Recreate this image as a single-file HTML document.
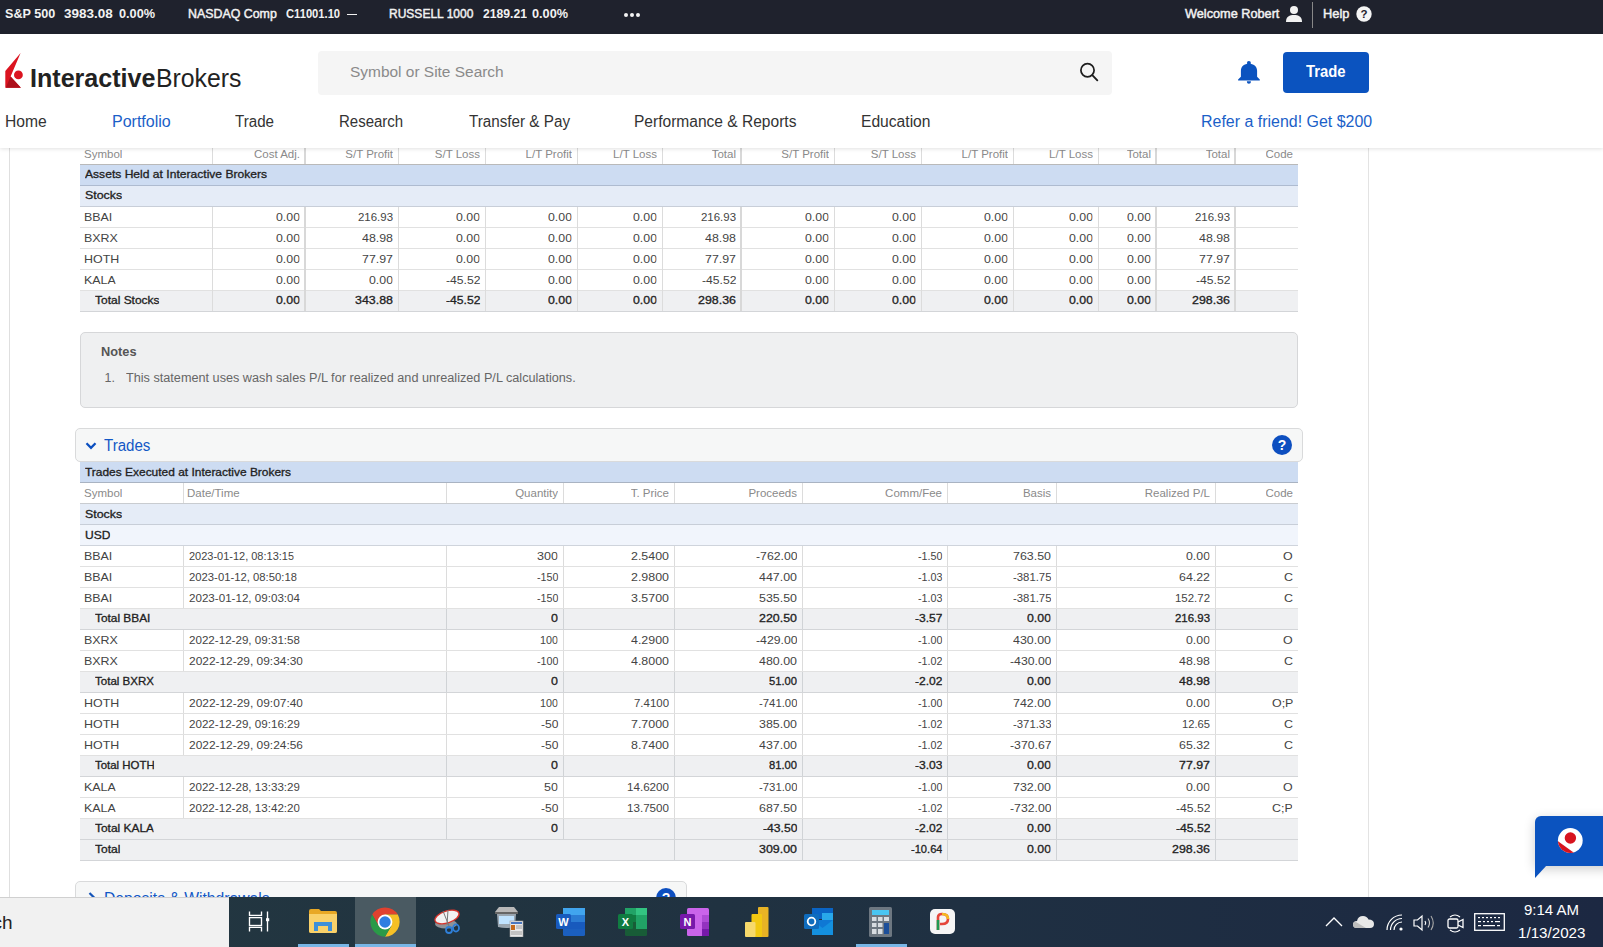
<!DOCTYPE html><html><head><meta charset="utf-8"><style>
*{box-sizing:border-box;margin:0;padding:0}
html,body{width:1603px;height:947px;overflow:hidden;background:#fff;font-family:"Liberation Sans",sans-serif;color:#333}
.a{position:absolute;white-space:nowrap}
#top{position:absolute;left:0;top:0;width:1603px;height:34px;background:#1f222d}
#top .t{position:absolute;top:7px;font-size:13px;font-weight:bold;color:#f2f2f2;line-height:13px}
#hdr{position:absolute;left:0;top:34px;width:1603px;height:114px;background:#fff;z-index:5;box-shadow:0 1px 4px rgba(0,0,0,0.12)}
.nav{position:absolute;top:78.5px;font-size:16px;line-height:18px;color:#333}
.cell{position:absolute;font-size:11px;line-height:12px;white-space:nowrap;overflow:hidden}
.r{text-align:right}
</style></head><body>
<div id="top">
<span class="t" style="left:4.5px;top:7px;font-size:13px;display:inline-block;transform:scaleX(0.9692);transform-origin:0 0;">S&amp;P 500</span>
<span class="t" style="left:64.3px;top:7px;font-size:13px;display:inline-block;transform:scaleX(1.0362);transform-origin:0 0;">3983.08</span>
<span class="t" style="left:119.2px;top:7px;font-size:13px;display:inline-block;transform:scaleX(0.9790);transform-origin:0 0;">0.00%</span>
<span class="t" style="left:187.5px;top:7.6px;font-size:12.5px;font-weight:normal;-webkit-text-stroke:0.45px #f2f2f2;display:inline-block;transform:scaleX(0.9910);transform-origin:0 0;">NASDAQ Comp</span>
<span class="t" style="left:285.9px;top:7px;font-size:13px;display:inline-block;transform:scaleX(0.8600);transform-origin:0 0;">C11001.10</span>
<span class="a" style="left:347px;top:13.5px;width:10px;height:1.5px;background:#f2f2f2"></span>
<span class="t" style="left:388.6px;top:7.6px;font-size:12.5px;font-weight:normal;-webkit-text-stroke:0.45px #f2f2f2;display:inline-block;transform:scaleX(0.9613);transform-origin:0 0;">RUSSELL 1000</span>
<span class="t" style="left:482.5px;top:7px;font-size:13px;display:inline-block;transform:scaleX(0.9340);transform-origin:0 0;">2189.21</span>
<span class="t" style="left:531.8px;top:7px;font-size:13px;display:inline-block;transform:scaleX(0.9763);transform-origin:0 0;">0.00%</span>
<span class="a" style="left:624px;top:13px;width:4px;height:4px;border-radius:2px;background:#f4f4f4"></span>
<span class="a" style="left:630px;top:13px;width:4px;height:4px;border-radius:2px;background:#f4f4f4"></span>
<span class="a" style="left:636px;top:13px;width:4px;height:4px;border-radius:2px;background:#f4f4f4"></span>
<span class="t" style="left:1185.4px;top:7.6px;font-size:12.5px;font-weight:normal;-webkit-text-stroke:0.45px #f2f2f2;display:inline-block;transform:scaleX(1.0166);transform-origin:0 0;">Welcome Robert</span>
<svg class="a" style="left:1285px;top:5px" width="18" height="18" viewBox="0 0 18 18"><circle cx="9" cy="5" r="4" fill="#f2f2f2"/><path d="M1 17 C1 11.5 4.5 10 9 10 C13.5 10 17 11.5 17 17 Z" fill="#f2f2f2"/></svg>
<span class="a" style="left:1312px;top:2px;width:1px;height:26px;background:#888"></span>
<span class="t" style="left:1323.4px;top:7.6px;font-size:12.5px;font-weight:normal;-webkit-text-stroke:0.45px #f2f2f2;display:inline-block;transform:scaleX(1.0265);transform-origin:0 0;">Help</span>
<svg class="a" style="left:1356px;top:6px" width="16" height="16" viewBox="0 0 16 16"><circle cx="8" cy="8" r="7.7" fill="#f5f5f5"/><text x="8" y="12.3" text-anchor="middle" font-family="Liberation Sans" font-weight="bold" font-size="11.5" fill="#1f222d">?</text></svg>
</div>
<div id="hdr">
<svg class="a" style="left:4px;top:19px" width="20" height="36" viewBox="0 0 20 36"><path d="M16.6 0 L1.3 17.9 L1.3 34.7 L16.9 34.7 L6.6 23.6 Z" fill="#db1420"/><path d="M6.6 23.6 L16.9 34.7 L1.8 34.7 Z" fill="#ad0f1a"/><circle cx="14.4" cy="21.9" r="4.4" fill="#db1420"/></svg>
<span class="a" style="left:30.4px;top:29px;font-size:25px;line-height:30px;color:#222;font-weight:bold;display:inline-block;transform:scaleX(1.0035);transform-origin:0 0;">Interactive</span>
<span class="a" style="left:156px;top:29px;font-size:25px;line-height:30px;color:#222;display:inline-block;transform:scaleX(0.9926);transform-origin:0 0;">Brokers</span>
<div class="a" style="left:318px;top:17px;width:794px;height:44px;background:#f5f5f5;border-radius:4px"></div>
<span class="a" style="left:350px;top:29px;font-size:15.5px;line-height:18px;color:#8a8a8a;display:inline-block;transform:scaleX(0.9966);transform-origin:0 0;">Symbol or Site Search</span>
<svg class="a" style="left:1077px;top:27px" width="24" height="24" viewBox="0 0 24 24"><circle cx="10.5" cy="9.3" r="6.6" fill="none" stroke="#1e1e1e" stroke-width="1.75"/><path d="M15.3 14.2 L20.3 19.3" stroke="#1e1e1e" stroke-width="1.9" stroke-linecap="round"/></svg>
<svg class="a" style="left:1237px;top:26px" width="24" height="25" viewBox="0 0 24 25"><circle cx="11.9" cy="3.1" r="2" fill="#0b53bf"/><path d="M3.9 16.8 V10.8 C3.9 6.2 7.4 3.7 11.9 3.7 C16.4 3.7 20.1 6.2 20.1 10.8 V16.8 L22.8 19.6 V20.5 H1.1 V19.6 Z" fill="#0b53bf"/><path d="M9.9 21.2 H13.9 C13.9 23 13.1 23.7 11.9 23.7 C10.7 23.7 9.9 23 9.9 21.2 Z" fill="#0b53bf"/></svg>
<div class="a" style="left:1283px;top:18px;width:86px;height:41px;background:#0b53bf;border-radius:4px"></div>
<span class="a" style="left:1306.4px;top:29px;font-size:16px;line-height:18px;font-weight:bold;color:#fff;display:inline-block;transform:scaleX(0.9277);transform-origin:0 0;">Trade</span>
<span class="nav" style="left:5px;color:#333;display:inline-block;transform:scaleX(0.9769);transform-origin:0 0;">Home</span>
<span class="nav" style="left:111.5px;color:#1b5fc8;display:inline-block;transform:scaleX(0.9999);transform-origin:0 0;">Portfolio</span>
<span class="nav" style="left:235px;color:#333;display:inline-block;transform:scaleX(0.9465);transform-origin:0 0;">Trade</span>
<span class="nav" style="left:338.8px;color:#333;display:inline-block;transform:scaleX(0.9374);transform-origin:0 0;">Research</span>
<span class="nav" style="left:468.5px;color:#333;display:inline-block;transform:scaleX(0.9518);transform-origin:0 0;">Transfer &amp; Pay</span>
<span class="nav" style="left:633.8px;color:#333;display:inline-block;transform:scaleX(0.9714);transform-origin:0 0;">Performance &amp; Reports</span>
<span class="nav" style="left:861.3px;color:#333;display:inline-block;transform:scaleX(0.9765);transform-origin:0 0;">Education</span>
<span class="nav" style="left:1201.3px;color:#1b5fc8;display:inline-block;transform:scaleX(0.9973);transform-origin:0 0;">Refer a friend! Get $200</span>
</div>
<div class="a" style="left:9px;top:148px;width:1px;height:749px;background:#dfdfdf"></div>
<div class="a" style="left:1368px;top:148px;width:1px;height:749px;background:#e3e3e3"></div>
<span class="cell" style="left:84.00px;top:148px;color:#8a8a8a;font-size:11.5px;transform:scaleX(1.0000);transform-origin:0 0">Symbol</span>
<span class="cell" style="left:253.97px;top:148px;color:#8a8a8a;font-size:11.5px;transform:scaleX(1.0000);transform-origin:0 0">Cost Adj.</span>
<span class="cell" style="left:345.28px;top:148px;color:#8a8a8a;font-size:11.5px;transform:scaleX(1.0000);transform-origin:0 0">S/T Profit</span>
<span class="cell" style="left:434.83px;top:148px;color:#8a8a8a;font-size:11.5px;transform:scaleX(1.0000);transform-origin:0 0">S/T Loss</span>
<span class="cell" style="left:525.55px;top:148px;color:#8a8a8a;font-size:11.5px;transform:scaleX(1.0000);transform-origin:0 0">L/T Profit</span>
<span class="cell" style="left:613.09px;top:148px;color:#8a8a8a;font-size:11.5px;transform:scaleX(1.0000);transform-origin:0 0">L/T Loss</span>
<span class="cell" style="left:711.70px;top:148px;color:#8a8a8a;font-size:11.5px;transform:scaleX(1.0000);transform-origin:0 0">Total</span>
<span class="cell" style="left:781.28px;top:148px;color:#8a8a8a;font-size:11.5px;transform:scaleX(1.0000);transform-origin:0 0">S/T Profit</span>
<span class="cell" style="left:870.83px;top:148px;color:#8a8a8a;font-size:11.5px;transform:scaleX(1.0000);transform-origin:0 0">S/T Loss</span>
<span class="cell" style="left:961.55px;top:148px;color:#8a8a8a;font-size:11.5px;transform:scaleX(1.0000);transform-origin:0 0">L/T Profit</span>
<span class="cell" style="left:1049.09px;top:148px;color:#8a8a8a;font-size:11.5px;transform:scaleX(1.0000);transform-origin:0 0">L/T Loss</span>
<span class="cell" style="left:1126.70px;top:148px;color:#8a8a8a;font-size:11.5px;transform:scaleX(1.0000);transform-origin:0 0">Total</span>
<span class="cell" style="left:1205.70px;top:148px;color:#8a8a8a;font-size:11.5px;transform:scaleX(1.0000);transform-origin:0 0">Total</span>
<span class="cell" style="left:1265.50px;top:148px;color:#8a8a8a;font-size:11.5px;transform:scaleX(1.0000);transform-origin:0 0">Code</span>
<div class="a" style="left:80px;top:164px;width:1218px;height:1px;background:#b9b9b9"></div>
<div class="a" style="left:80px;top:165px;width:1218px;height:20px;background:#cddcf2"></div>
<div class="a" style="left:80px;top:185px;width:1218px;height:1px;background:#aebbd0"></div>
<span class="cell" style="left:84.50px;top:168px;color:#222;-webkit-text-stroke:0.3px #222;font-size:11px;transform:scaleX(1.0991);transform-origin:0 0">Assets Held at Interactive Brokers</span>
<div class="a" style="left:80px;top:186px;width:1218px;height:20px;background:#e5ecf7"></div>
<div class="a" style="left:80px;top:206px;width:1218px;height:1px;background:#c8ced8"></div>
<span class="cell" style="left:84.50px;top:189px;color:#222;-webkit-text-stroke:0.3px #222;font-size:11px;transform:scaleX(1.1255);transform-origin:0 0">Stocks</span>
<span class="cell" style="left:84.00px;top:211px;color:#444;font-size:11px;transform:scaleX(1.1300);transform-origin:0 0">BBAI</span>
<span class="cell" style="left:276.00px;top:211px;color:#444;font-size:11px;transform:scaleX(1.1204);transform-origin:0 0">0.00</span>
<span class="cell" style="left:358.00px;top:211px;color:#444;font-size:11px;transform:scaleX(1.0399);transform-origin:0 0">216.93</span>
<span class="cell" style="left:456.00px;top:211px;color:#444;font-size:11px;transform:scaleX(1.1204);transform-origin:0 0">0.00</span>
<span class="cell" style="left:548.00px;top:211px;color:#444;font-size:11px;transform:scaleX(1.1204);transform-origin:0 0">0.00</span>
<span class="cell" style="left:633.00px;top:211px;color:#444;font-size:11px;transform:scaleX(1.1204);transform-origin:0 0">0.00</span>
<span class="cell" style="left:701.00px;top:211px;color:#444;font-size:11px;transform:scaleX(1.0399);transform-origin:0 0">216.93</span>
<span class="cell" style="left:805.00px;top:211px;color:#444;font-size:11px;transform:scaleX(1.1204);transform-origin:0 0">0.00</span>
<span class="cell" style="left:892.00px;top:211px;color:#444;font-size:11px;transform:scaleX(1.1204);transform-origin:0 0">0.00</span>
<span class="cell" style="left:984.00px;top:211px;color:#444;font-size:11px;transform:scaleX(1.1204);transform-origin:0 0">0.00</span>
<span class="cell" style="left:1069.00px;top:211px;color:#444;font-size:11px;transform:scaleX(1.1204);transform-origin:0 0">0.00</span>
<span class="cell" style="left:1127.00px;top:211px;color:#444;font-size:11px;transform:scaleX(1.1204);transform-origin:0 0">0.00</span>
<span class="cell" style="left:1195.00px;top:211px;color:#444;font-size:11px;transform:scaleX(1.0399);transform-origin:0 0">216.93</span>
<div class="a" style="left:80px;top:227px;width:1218px;height:1px;background:#e1e1e1"></div>
<span class="cell" style="left:84.00px;top:232px;color:#444;font-size:11px;transform:scaleX(1.1300);transform-origin:0 0">BXRX</span>
<span class="cell" style="left:276.00px;top:232px;color:#444;font-size:11px;transform:scaleX(1.1204);transform-origin:0 0">0.00</span>
<span class="cell" style="left:362.00px;top:232px;color:#444;font-size:11px;transform:scaleX(1.1260);transform-origin:0 0">48.98</span>
<span class="cell" style="left:456.00px;top:232px;color:#444;font-size:11px;transform:scaleX(1.1204);transform-origin:0 0">0.00</span>
<span class="cell" style="left:548.00px;top:232px;color:#444;font-size:11px;transform:scaleX(1.1204);transform-origin:0 0">0.00</span>
<span class="cell" style="left:633.00px;top:232px;color:#444;font-size:11px;transform:scaleX(1.1204);transform-origin:0 0">0.00</span>
<span class="cell" style="left:705.00px;top:232px;color:#444;font-size:11px;transform:scaleX(1.1260);transform-origin:0 0">48.98</span>
<span class="cell" style="left:805.00px;top:232px;color:#444;font-size:11px;transform:scaleX(1.1204);transform-origin:0 0">0.00</span>
<span class="cell" style="left:892.00px;top:232px;color:#444;font-size:11px;transform:scaleX(1.1204);transform-origin:0 0">0.00</span>
<span class="cell" style="left:984.00px;top:232px;color:#444;font-size:11px;transform:scaleX(1.1204);transform-origin:0 0">0.00</span>
<span class="cell" style="left:1069.00px;top:232px;color:#444;font-size:11px;transform:scaleX(1.1204);transform-origin:0 0">0.00</span>
<span class="cell" style="left:1127.00px;top:232px;color:#444;font-size:11px;transform:scaleX(1.1204);transform-origin:0 0">0.00</span>
<span class="cell" style="left:1199.00px;top:232px;color:#444;font-size:11px;transform:scaleX(1.1260);transform-origin:0 0">48.98</span>
<div class="a" style="left:80px;top:248px;width:1218px;height:1px;background:#e1e1e1"></div>
<span class="cell" style="left:84.00px;top:253px;color:#444;font-size:11px;transform:scaleX(1.1300);transform-origin:0 0">HOTH</span>
<span class="cell" style="left:276.00px;top:253px;color:#444;font-size:11px;transform:scaleX(1.1204);transform-origin:0 0">0.00</span>
<span class="cell" style="left:362.00px;top:253px;color:#444;font-size:11px;transform:scaleX(1.1260);transform-origin:0 0">77.97</span>
<span class="cell" style="left:456.00px;top:253px;color:#444;font-size:11px;transform:scaleX(1.1204);transform-origin:0 0">0.00</span>
<span class="cell" style="left:548.00px;top:253px;color:#444;font-size:11px;transform:scaleX(1.1204);transform-origin:0 0">0.00</span>
<span class="cell" style="left:633.00px;top:253px;color:#444;font-size:11px;transform:scaleX(1.1204);transform-origin:0 0">0.00</span>
<span class="cell" style="left:705.00px;top:253px;color:#444;font-size:11px;transform:scaleX(1.1260);transform-origin:0 0">77.97</span>
<span class="cell" style="left:805.00px;top:253px;color:#444;font-size:11px;transform:scaleX(1.1204);transform-origin:0 0">0.00</span>
<span class="cell" style="left:892.00px;top:253px;color:#444;font-size:11px;transform:scaleX(1.1204);transform-origin:0 0">0.00</span>
<span class="cell" style="left:984.00px;top:253px;color:#444;font-size:11px;transform:scaleX(1.1204);transform-origin:0 0">0.00</span>
<span class="cell" style="left:1069.00px;top:253px;color:#444;font-size:11px;transform:scaleX(1.1204);transform-origin:0 0">0.00</span>
<span class="cell" style="left:1127.00px;top:253px;color:#444;font-size:11px;transform:scaleX(1.1204);transform-origin:0 0">0.00</span>
<span class="cell" style="left:1199.00px;top:253px;color:#444;font-size:11px;transform:scaleX(1.1260);transform-origin:0 0">77.97</span>
<div class="a" style="left:80px;top:269px;width:1218px;height:1px;background:#e1e1e1"></div>
<span class="cell" style="left:84.00px;top:274px;color:#444;font-size:11px;transform:scaleX(1.1300);transform-origin:0 0">KALA</span>
<span class="cell" style="left:276.00px;top:274px;color:#444;font-size:11px;transform:scaleX(1.1204);transform-origin:0 0">0.00</span>
<span class="cell" style="left:369.00px;top:274px;color:#444;font-size:11px;transform:scaleX(1.1204);transform-origin:0 0">0.00</span>
<span class="cell" style="left:445.50px;top:274px;color:#444;font-size:11px;transform:scaleX(1.1057);transform-origin:0 0">-45.52</span>
<span class="cell" style="left:548.00px;top:274px;color:#444;font-size:11px;transform:scaleX(1.1204);transform-origin:0 0">0.00</span>
<span class="cell" style="left:633.00px;top:274px;color:#444;font-size:11px;transform:scaleX(1.1204);transform-origin:0 0">0.00</span>
<span class="cell" style="left:701.50px;top:274px;color:#444;font-size:11px;transform:scaleX(1.1057);transform-origin:0 0">-45.52</span>
<span class="cell" style="left:805.00px;top:274px;color:#444;font-size:11px;transform:scaleX(1.1204);transform-origin:0 0">0.00</span>
<span class="cell" style="left:892.00px;top:274px;color:#444;font-size:11px;transform:scaleX(1.1204);transform-origin:0 0">0.00</span>
<span class="cell" style="left:984.00px;top:274px;color:#444;font-size:11px;transform:scaleX(1.1204);transform-origin:0 0">0.00</span>
<span class="cell" style="left:1069.00px;top:274px;color:#444;font-size:11px;transform:scaleX(1.1204);transform-origin:0 0">0.00</span>
<span class="cell" style="left:1127.00px;top:274px;color:#444;font-size:11px;transform:scaleX(1.1204);transform-origin:0 0">0.00</span>
<span class="cell" style="left:1195.50px;top:274px;color:#444;font-size:11px;transform:scaleX(1.1057);transform-origin:0 0">-45.52</span>
<div class="a" style="left:80px;top:290px;width:1218px;height:1px;background:#e1e1e1"></div>
<div class="a" style="left:80px;top:291px;width:1218px;height:20px;background:#eff0f2"></div>
<span class="cell" style="left:95.00px;top:294px;color:#222;-webkit-text-stroke:0.3px #222;font-size:11px;transform:scaleX(1.0890);transform-origin:0 0">Total Stocks</span>
<span class="cell" style="left:276.00px;top:294px;color:#222;-webkit-text-stroke:0.3px #222;font-size:11px;transform:scaleX(1.1204);transform-origin:0 0">0.00</span>
<span class="cell" style="left:355.00px;top:294px;color:#222;-webkit-text-stroke:0.3px #222;font-size:11px;transform:scaleX(1.1291);transform-origin:0 0">343.88</span>
<span class="cell" style="left:445.50px;top:294px;color:#222;-webkit-text-stroke:0.3px #222;font-size:11px;transform:scaleX(1.1057);transform-origin:0 0">-45.52</span>
<span class="cell" style="left:548.00px;top:294px;color:#222;-webkit-text-stroke:0.3px #222;font-size:11px;transform:scaleX(1.1204);transform-origin:0 0">0.00</span>
<span class="cell" style="left:633.00px;top:294px;color:#222;-webkit-text-stroke:0.3px #222;font-size:11px;transform:scaleX(1.1204);transform-origin:0 0">0.00</span>
<span class="cell" style="left:698.00px;top:294px;color:#222;-webkit-text-stroke:0.3px #222;font-size:11px;transform:scaleX(1.1291);transform-origin:0 0">298.36</span>
<span class="cell" style="left:805.00px;top:294px;color:#222;-webkit-text-stroke:0.3px #222;font-size:11px;transform:scaleX(1.1204);transform-origin:0 0">0.00</span>
<span class="cell" style="left:892.00px;top:294px;color:#222;-webkit-text-stroke:0.3px #222;font-size:11px;transform:scaleX(1.1204);transform-origin:0 0">0.00</span>
<span class="cell" style="left:984.00px;top:294px;color:#222;-webkit-text-stroke:0.3px #222;font-size:11px;transform:scaleX(1.1204);transform-origin:0 0">0.00</span>
<span class="cell" style="left:1069.00px;top:294px;color:#222;-webkit-text-stroke:0.3px #222;font-size:11px;transform:scaleX(1.1204);transform-origin:0 0">0.00</span>
<span class="cell" style="left:1127.00px;top:294px;color:#222;-webkit-text-stroke:0.3px #222;font-size:11px;transform:scaleX(1.1204);transform-origin:0 0">0.00</span>
<span class="cell" style="left:1192.00px;top:294px;color:#222;-webkit-text-stroke:0.3px #222;font-size:11px;transform:scaleX(1.1291);transform-origin:0 0">298.36</span>
<div class="a" style="left:80px;top:311px;width:1218px;height:1px;background:#d3d5d8"></div>
<div class="a" style="left:212px;top:148px;width:1px;height:16px;background:#dcdcdc"></div>
<div class="a" style="left:212px;top:207px;width:1px;height:104px;background:#dcdcdc"></div>
<div class="a" style="left:304px;top:148px;width:2px;height:16px;background:#d8d8d8"></div>
<div class="a" style="left:304px;top:207px;width:2px;height:104px;background:#d8d8d8"></div>
<div class="a" style="left:398px;top:148px;width:1px;height:16px;background:#dcdcdc"></div>
<div class="a" style="left:398px;top:207px;width:1px;height:104px;background:#dcdcdc"></div>
<div class="a" style="left:485px;top:148px;width:1px;height:16px;background:#dcdcdc"></div>
<div class="a" style="left:485px;top:207px;width:1px;height:104px;background:#dcdcdc"></div>
<div class="a" style="left:577px;top:148px;width:1px;height:16px;background:#dcdcdc"></div>
<div class="a" style="left:577px;top:207px;width:1px;height:104px;background:#dcdcdc"></div>
<div class="a" style="left:662px;top:148px;width:1px;height:16px;background:#dcdcdc"></div>
<div class="a" style="left:662px;top:207px;width:1px;height:104px;background:#dcdcdc"></div>
<div class="a" style="left:740px;top:148px;width:2px;height:16px;background:#d8d8d8"></div>
<div class="a" style="left:740px;top:207px;width:2px;height:104px;background:#d8d8d8"></div>
<div class="a" style="left:834px;top:148px;width:1px;height:16px;background:#dcdcdc"></div>
<div class="a" style="left:834px;top:207px;width:1px;height:104px;background:#dcdcdc"></div>
<div class="a" style="left:921px;top:148px;width:1px;height:16px;background:#dcdcdc"></div>
<div class="a" style="left:921px;top:207px;width:1px;height:104px;background:#dcdcdc"></div>
<div class="a" style="left:1013px;top:148px;width:1px;height:16px;background:#dcdcdc"></div>
<div class="a" style="left:1013px;top:207px;width:1px;height:104px;background:#dcdcdc"></div>
<div class="a" style="left:1098px;top:148px;width:1px;height:16px;background:#dcdcdc"></div>
<div class="a" style="left:1098px;top:207px;width:1px;height:104px;background:#dcdcdc"></div>
<div class="a" style="left:1155px;top:148px;width:2px;height:16px;background:#d8d8d8"></div>
<div class="a" style="left:1155px;top:207px;width:2px;height:104px;background:#d8d8d8"></div>
<div class="a" style="left:1234px;top:148px;width:2px;height:16px;background:#d8d8d8"></div>
<div class="a" style="left:1234px;top:207px;width:2px;height:104px;background:#d8d8d8"></div>
<div class="a" style="left:80px;top:332px;width:1218px;height:76px;background:#eff0f1;border:1px solid #d6d7d9;border-radius:5px"></div>
<span class="a" style="left:100.8px;top:345.5px;font-size:12.5px;font-weight:bold;color:#555;line-height:13px;display:inline-block;transform:scaleX(1.0220);transform-origin:0 0;">Notes</span>
<span class="a" style="left:104.5px;top:371.5px;font-size:12.5px;color:#666;line-height:13px">1.</span>
<span class="a" style="left:126px;top:371.5px;font-size:12.5px;color:#666;line-height:13px;display:inline-block;transform:scaleX(1.0134);transform-origin:0 0;">This statement uses wash sales P/L for realized and unrealized P/L calculations.</span>
<div class="a" style="left:75px;top:428px;width:1228px;height:34px;background:#f6f7f7;border:1px solid #d9dadb;border-radius:5px"></div>
<svg class="a" style="left:84px;top:439px" width="14" height="14" viewBox="0 0 14 14"><path d="M2.5 4.3 L7 8.8 L11.5 4.3" fill="none" stroke="#0b4fc0" stroke-width="2.3"/></svg>
<span class="a" style="left:104px;top:437px;font-size:16px;line-height:18px;color:#1258c6;display:inline-block;transform:scaleX(0.9430);transform-origin:0 0;">Trades</span>
<svg class="a" style="left:1272px;top:435px" width="20" height="20" viewBox="0 0 20 20"><circle cx="10" cy="10" r="10" fill="#0d4fc0"/><text x="10" y="15" text-anchor="middle" font-family="Liberation Sans" font-weight="bold" font-size="14" fill="#fff">?</text></svg>
<div class="a" style="left:80px;top:462px;width:1218px;height:20px;background:#cddcf2"></div>
<div class="a" style="left:80px;top:482px;width:1218px;height:1px;background:#a9b3c2"></div>
<span class="cell" style="left:84.50px;top:466px;color:#222;-webkit-text-stroke:0.3px #222;font-size:11px;transform:scaleX(1.0859);transform-origin:0 0">Trades Executed at Interactive Brokers</span>
<span class="cell" style="left:84.00px;top:487px;color:#8a8a8a;font-size:11.5px;transform:scaleX(1.0000);transform-origin:0 0">Symbol</span>
<span class="cell" style="left:187.00px;top:487px;color:#8a8a8a;font-size:11.5px;transform:scaleX(1.0000);transform-origin:0 0">Date/Time</span>
<span class="cell" style="left:515.17px;top:487px;color:#8a8a8a;font-size:11.5px;transform:scaleX(1.0000);transform-origin:0 0">Quantity</span>
<span class="cell" style="left:630.66px;top:487px;color:#8a8a8a;font-size:11.5px;transform:scaleX(1.0000);transform-origin:0 0">T. Price</span>
<span class="cell" style="left:748.41px;top:487px;color:#8a8a8a;font-size:11.5px;transform:scaleX(1.0000);transform-origin:0 0">Proceeds</span>
<span class="cell" style="left:885.12px;top:487px;color:#8a8a8a;font-size:11.5px;transform:scaleX(1.0000);transform-origin:0 0">Comm/Fee</span>
<span class="cell" style="left:1022.88px;top:487px;color:#8a8a8a;font-size:11.5px;transform:scaleX(1.0000);transform-origin:0 0">Basis</span>
<span class="cell" style="left:1144.78px;top:487px;color:#8a8a8a;font-size:11.5px;transform:scaleX(1.0000);transform-origin:0 0">Realized P/L</span>
<span class="cell" style="left:1265.50px;top:487px;color:#8a8a8a;font-size:11.5px;transform:scaleX(1.0000);transform-origin:0 0">Code</span>
<div class="a" style="left:80px;top:503px;width:1218px;height:1px;background:#c9ccd0"></div>
<div class="a" style="left:183px;top:483px;width:1px;height:20px;background:#dcdcdc"></div>
<div class="a" style="left:446px;top:483px;width:1px;height:20px;background:#dcdcdc"></div>
<div class="a" style="left:563px;top:483px;width:1px;height:20px;background:#dcdcdc"></div>
<div class="a" style="left:674px;top:483px;width:1px;height:20px;background:#dcdcdc"></div>
<div class="a" style="left:802px;top:483px;width:1px;height:20px;background:#dcdcdc"></div>
<div class="a" style="left:947px;top:483px;width:1px;height:20px;background:#dcdcdc"></div>
<div class="a" style="left:1056px;top:483px;width:1px;height:20px;background:#dcdcdc"></div>
<div class="a" style="left:1215px;top:483px;width:1px;height:20px;background:#dcdcdc"></div>
<div class="a" style="left:80px;top:504px;width:1218px;height:20px;background:#e5ecf7"></div>
<div class="a" style="left:80px;top:524px;width:1218px;height:1px;background:#c8ced8"></div>
<span class="cell" style="left:84.50px;top:508px;color:#222;-webkit-text-stroke:0.3px #222;font-size:11px;transform:scaleX(1.1255);transform-origin:0 0">Stocks</span>
<div class="a" style="left:80px;top:525px;width:1218px;height:20px;background:#f1f5fc"></div>
<div class="a" style="left:80px;top:545px;width:1218px;height:1px;background:#cfd4dc"></div>
<span class="cell" style="left:84.50px;top:529px;color:#222;-webkit-text-stroke:0.3px #222;font-size:11px;transform:scaleX(1.1000);transform-origin:0 0">USD</span>
<span class="cell" style="left:84.00px;top:550px;color:#444;font-size:11px;transform:scaleX(1.1300);transform-origin:0 0">BBAI</span>
<span class="cell" style="left:189.00px;top:550px;color:#444;font-size:11px;transform:scaleX(0.9981);transform-origin:0 0">2023-01-12, 08:13:15</span>
<span class="cell" style="left:537.00px;top:550px;color:#444;font-size:11px;transform:scaleX(1.1438);transform-origin:0 0">300</span>
<span class="cell" style="left:631.00px;top:550px;color:#444;font-size:11px;transform:scaleX(1.1291);transform-origin:0 0">2.5400</span>
<span class="cell" style="left:755.50px;top:550px;color:#444;font-size:11px;transform:scaleX(1.1122);transform-origin:0 0">-762.00</span>
<span class="cell" style="left:917.50px;top:550px;color:#444;font-size:11px;transform:scaleX(0.9769);transform-origin:0 0">-1.50</span>
<span class="cell" style="left:1013.00px;top:550px;color:#444;font-size:11px;transform:scaleX(1.1291);transform-origin:0 0">763.50</span>
<span class="cell" style="left:1186.00px;top:550px;color:#444;font-size:11px;transform:scaleX(1.1204);transform-origin:0 0">0.00</span>
<span class="cell" style="left:1283.32px;top:550px;color:#444;font-size:11px;transform:scaleX(1.1300);transform-origin:0 0">O</span>
<div class="a" style="left:183px;top:546px;width:1px;height:20px;background:#dcdcdc"></div>
<div class="a" style="left:446px;top:546px;width:1px;height:20px;background:#dcdcdc"></div>
<div class="a" style="left:563px;top:546px;width:1px;height:20px;background:#dcdcdc"></div>
<div class="a" style="left:674px;top:546px;width:1px;height:20px;background:#dcdcdc"></div>
<div class="a" style="left:802px;top:546px;width:1px;height:20px;background:#dcdcdc"></div>
<div class="a" style="left:947px;top:546px;width:1px;height:20px;background:#dcdcdc"></div>
<div class="a" style="left:1056px;top:546px;width:1px;height:20px;background:#dcdcdc"></div>
<div class="a" style="left:1215px;top:546px;width:1px;height:20px;background:#dcdcdc"></div>
<div class="a" style="left:80px;top:566px;width:1218px;height:1px;background:#e1e1e1"></div>
<span class="cell" style="left:84.00px;top:571px;color:#444;font-size:11px;transform:scaleX(1.1300);transform-origin:0 0">BBAI</span>
<span class="cell" style="left:189.00px;top:571px;color:#444;font-size:11px;transform:scaleX(1.0266);transform-origin:0 0">2023-01-12, 08:50:18</span>
<span class="cell" style="left:536.50px;top:571px;color:#444;font-size:11px;transform:scaleX(0.9759);transform-origin:0 0">-150</span>
<span class="cell" style="left:631.00px;top:571px;color:#444;font-size:11px;transform:scaleX(1.1291);transform-origin:0 0">2.9800</span>
<span class="cell" style="left:759.00px;top:571px;color:#444;font-size:11px;transform:scaleX(1.1291);transform-origin:0 0">447.00</span>
<span class="cell" style="left:917.50px;top:571px;color:#444;font-size:11px;transform:scaleX(0.9769);transform-origin:0 0">-1.03</span>
<span class="cell" style="left:1012.50px;top:571px;color:#444;font-size:11px;transform:scaleX(1.0318);transform-origin:0 0">-381.75</span>
<span class="cell" style="left:1179.00px;top:571px;color:#444;font-size:11px;transform:scaleX(1.1260);transform-origin:0 0">64.22</span>
<span class="cell" style="left:1284.01px;top:571px;color:#444;font-size:11px;transform:scaleX(1.1300);transform-origin:0 0">C</span>
<div class="a" style="left:183px;top:567px;width:1px;height:20px;background:#dcdcdc"></div>
<div class="a" style="left:446px;top:567px;width:1px;height:20px;background:#dcdcdc"></div>
<div class="a" style="left:563px;top:567px;width:1px;height:20px;background:#dcdcdc"></div>
<div class="a" style="left:674px;top:567px;width:1px;height:20px;background:#dcdcdc"></div>
<div class="a" style="left:802px;top:567px;width:1px;height:20px;background:#dcdcdc"></div>
<div class="a" style="left:947px;top:567px;width:1px;height:20px;background:#dcdcdc"></div>
<div class="a" style="left:1056px;top:567px;width:1px;height:20px;background:#dcdcdc"></div>
<div class="a" style="left:1215px;top:567px;width:1px;height:20px;background:#dcdcdc"></div>
<div class="a" style="left:80px;top:587px;width:1218px;height:1px;background:#e1e1e1"></div>
<span class="cell" style="left:84.00px;top:592px;color:#444;font-size:11px;transform:scaleX(1.1300);transform-origin:0 0">BBAI</span>
<span class="cell" style="left:189.00px;top:592px;color:#444;font-size:11px;transform:scaleX(1.0551);transform-origin:0 0">2023-01-12, 09:03:04</span>
<span class="cell" style="left:536.50px;top:592px;color:#444;font-size:11px;transform:scaleX(0.9759);transform-origin:0 0">-150</span>
<span class="cell" style="left:631.00px;top:592px;color:#444;font-size:11px;transform:scaleX(1.1291);transform-origin:0 0">3.5700</span>
<span class="cell" style="left:759.00px;top:592px;color:#444;font-size:11px;transform:scaleX(1.1291);transform-origin:0 0">535.50</span>
<span class="cell" style="left:917.50px;top:592px;color:#444;font-size:11px;transform:scaleX(0.9769);transform-origin:0 0">-1.03</span>
<span class="cell" style="left:1012.50px;top:592px;color:#444;font-size:11px;transform:scaleX(1.0318);transform-origin:0 0">-381.75</span>
<span class="cell" style="left:1175.00px;top:592px;color:#444;font-size:11px;transform:scaleX(1.0399);transform-origin:0 0">152.72</span>
<span class="cell" style="left:1284.01px;top:592px;color:#444;font-size:11px;transform:scaleX(1.1300);transform-origin:0 0">C</span>
<div class="a" style="left:183px;top:588px;width:1px;height:20px;background:#dcdcdc"></div>
<div class="a" style="left:446px;top:588px;width:1px;height:20px;background:#dcdcdc"></div>
<div class="a" style="left:563px;top:588px;width:1px;height:20px;background:#dcdcdc"></div>
<div class="a" style="left:674px;top:588px;width:1px;height:20px;background:#dcdcdc"></div>
<div class="a" style="left:802px;top:588px;width:1px;height:20px;background:#dcdcdc"></div>
<div class="a" style="left:947px;top:588px;width:1px;height:20px;background:#dcdcdc"></div>
<div class="a" style="left:1056px;top:588px;width:1px;height:20px;background:#dcdcdc"></div>
<div class="a" style="left:1215px;top:588px;width:1px;height:20px;background:#dcdcdc"></div>
<div class="a" style="left:80px;top:608px;width:1218px;height:1px;background:#e1e1e1"></div>
<div class="a" style="left:80px;top:609px;width:1218px;height:20px;background:#eff0f2"></div>
<span class="cell" style="left:95.00px;top:612px;color:#222;-webkit-text-stroke:0.3px #222;font-size:11px;transform:scaleX(1.0788);transform-origin:0 0">Total BBAI</span>
<span class="cell" style="left:551.00px;top:612px;color:#222;-webkit-text-stroke:0.3px #222;font-size:11px;transform:scaleX(1.1429);transform-origin:0 0">0</span>
<span class="cell" style="left:759.00px;top:612px;color:#222;-webkit-text-stroke:0.3px #222;font-size:11px;transform:scaleX(1.1291);transform-origin:0 0">220.50</span>
<span class="cell" style="left:914.50px;top:612px;color:#222;-webkit-text-stroke:0.3px #222;font-size:11px;transform:scaleX(1.0966);transform-origin:0 0">-3.57</span>
<span class="cell" style="left:1027.00px;top:612px;color:#222;-webkit-text-stroke:0.3px #222;font-size:11px;transform:scaleX(1.1204);transform-origin:0 0">0.00</span>
<span class="cell" style="left:1175.00px;top:612px;color:#222;-webkit-text-stroke:0.3px #222;font-size:11px;transform:scaleX(1.0399);transform-origin:0 0">216.93</span>
<div class="a" style="left:446px;top:609px;width:1px;height:20px;background:#d0d3d6"></div>
<div class="a" style="left:563px;top:609px;width:1px;height:20px;background:#d0d3d6"></div>
<div class="a" style="left:674px;top:609px;width:1px;height:20px;background:#d0d3d6"></div>
<div class="a" style="left:802px;top:609px;width:1px;height:20px;background:#d0d3d6"></div>
<div class="a" style="left:947px;top:609px;width:1px;height:20px;background:#d0d3d6"></div>
<div class="a" style="left:1056px;top:609px;width:1px;height:20px;background:#d0d3d6"></div>
<div class="a" style="left:1215px;top:609px;width:1px;height:20px;background:#d0d3d6"></div>
<div class="a" style="left:80px;top:629px;width:1218px;height:1px;background:#d3d5d8"></div>
<span class="cell" style="left:84.00px;top:634px;color:#444;font-size:11px;transform:scaleX(1.1300);transform-origin:0 0">BXRX</span>
<span class="cell" style="left:189.00px;top:634px;color:#444;font-size:11px;transform:scaleX(1.0551);transform-origin:0 0">2022-12-29, 09:31:58</span>
<span class="cell" style="left:540.00px;top:634px;color:#444;font-size:11px;transform:scaleX(0.9804);transform-origin:0 0">100</span>
<span class="cell" style="left:631.00px;top:634px;color:#444;font-size:11px;transform:scaleX(1.1291);transform-origin:0 0">4.2900</span>
<span class="cell" style="left:755.50px;top:634px;color:#444;font-size:11px;transform:scaleX(1.1122);transform-origin:0 0">-429.00</span>
<span class="cell" style="left:917.50px;top:634px;color:#444;font-size:11px;transform:scaleX(0.9769);transform-origin:0 0">-1.00</span>
<span class="cell" style="left:1013.00px;top:634px;color:#444;font-size:11px;transform:scaleX(1.1291);transform-origin:0 0">430.00</span>
<span class="cell" style="left:1186.00px;top:634px;color:#444;font-size:11px;transform:scaleX(1.1204);transform-origin:0 0">0.00</span>
<span class="cell" style="left:1283.32px;top:634px;color:#444;font-size:11px;transform:scaleX(1.1300);transform-origin:0 0">O</span>
<div class="a" style="left:183px;top:630px;width:1px;height:20px;background:#dcdcdc"></div>
<div class="a" style="left:446px;top:630px;width:1px;height:20px;background:#dcdcdc"></div>
<div class="a" style="left:563px;top:630px;width:1px;height:20px;background:#dcdcdc"></div>
<div class="a" style="left:674px;top:630px;width:1px;height:20px;background:#dcdcdc"></div>
<div class="a" style="left:802px;top:630px;width:1px;height:20px;background:#dcdcdc"></div>
<div class="a" style="left:947px;top:630px;width:1px;height:20px;background:#dcdcdc"></div>
<div class="a" style="left:1056px;top:630px;width:1px;height:20px;background:#dcdcdc"></div>
<div class="a" style="left:1215px;top:630px;width:1px;height:20px;background:#dcdcdc"></div>
<div class="a" style="left:80px;top:650px;width:1218px;height:1px;background:#e1e1e1"></div>
<span class="cell" style="left:84.00px;top:655px;color:#444;font-size:11px;transform:scaleX(1.1300);transform-origin:0 0">BXRX</span>
<span class="cell" style="left:189.00px;top:655px;color:#444;font-size:11px;transform:scaleX(1.0836);transform-origin:0 0">2022-12-29, 09:34:30</span>
<span class="cell" style="left:536.50px;top:655px;color:#444;font-size:11px;transform:scaleX(0.9759);transform-origin:0 0">-100</span>
<span class="cell" style="left:631.00px;top:655px;color:#444;font-size:11px;transform:scaleX(1.1291);transform-origin:0 0">4.8000</span>
<span class="cell" style="left:759.00px;top:655px;color:#444;font-size:11px;transform:scaleX(1.1291);transform-origin:0 0">480.00</span>
<span class="cell" style="left:917.50px;top:655px;color:#444;font-size:11px;transform:scaleX(0.9769);transform-origin:0 0">-1.02</span>
<span class="cell" style="left:1009.50px;top:655px;color:#444;font-size:11px;transform:scaleX(1.1122);transform-origin:0 0">-430.00</span>
<span class="cell" style="left:1179.00px;top:655px;color:#444;font-size:11px;transform:scaleX(1.1260);transform-origin:0 0">48.98</span>
<span class="cell" style="left:1284.01px;top:655px;color:#444;font-size:11px;transform:scaleX(1.1300);transform-origin:0 0">C</span>
<div class="a" style="left:183px;top:651px;width:1px;height:20px;background:#dcdcdc"></div>
<div class="a" style="left:446px;top:651px;width:1px;height:20px;background:#dcdcdc"></div>
<div class="a" style="left:563px;top:651px;width:1px;height:20px;background:#dcdcdc"></div>
<div class="a" style="left:674px;top:651px;width:1px;height:20px;background:#dcdcdc"></div>
<div class="a" style="left:802px;top:651px;width:1px;height:20px;background:#dcdcdc"></div>
<div class="a" style="left:947px;top:651px;width:1px;height:20px;background:#dcdcdc"></div>
<div class="a" style="left:1056px;top:651px;width:1px;height:20px;background:#dcdcdc"></div>
<div class="a" style="left:1215px;top:651px;width:1px;height:20px;background:#dcdcdc"></div>
<div class="a" style="left:80px;top:671px;width:1218px;height:1px;background:#e1e1e1"></div>
<div class="a" style="left:80px;top:672px;width:1218px;height:20px;background:#eff0f2"></div>
<span class="cell" style="left:95.00px;top:675px;color:#222;-webkit-text-stroke:0.3px #222;font-size:11px;transform:scaleX(1.0503);transform-origin:0 0">Total BXRX</span>
<span class="cell" style="left:551.00px;top:675px;color:#222;-webkit-text-stroke:0.3px #222;font-size:11px;transform:scaleX(1.1429);transform-origin:0 0">0</span>
<span class="cell" style="left:769.00px;top:675px;color:#222;-webkit-text-stroke:0.3px #222;font-size:11px;transform:scaleX(1.0170);transform-origin:0 0">51.00</span>
<span class="cell" style="left:914.50px;top:675px;color:#222;-webkit-text-stroke:0.3px #222;font-size:11px;transform:scaleX(1.0966);transform-origin:0 0">-2.02</span>
<span class="cell" style="left:1027.00px;top:675px;color:#222;-webkit-text-stroke:0.3px #222;font-size:11px;transform:scaleX(1.1204);transform-origin:0 0">0.00</span>
<span class="cell" style="left:1179.00px;top:675px;color:#222;-webkit-text-stroke:0.3px #222;font-size:11px;transform:scaleX(1.1260);transform-origin:0 0">48.98</span>
<div class="a" style="left:446px;top:672px;width:1px;height:20px;background:#d0d3d6"></div>
<div class="a" style="left:563px;top:672px;width:1px;height:20px;background:#d0d3d6"></div>
<div class="a" style="left:674px;top:672px;width:1px;height:20px;background:#d0d3d6"></div>
<div class="a" style="left:802px;top:672px;width:1px;height:20px;background:#d0d3d6"></div>
<div class="a" style="left:947px;top:672px;width:1px;height:20px;background:#d0d3d6"></div>
<div class="a" style="left:1056px;top:672px;width:1px;height:20px;background:#d0d3d6"></div>
<div class="a" style="left:1215px;top:672px;width:1px;height:20px;background:#d0d3d6"></div>
<div class="a" style="left:80px;top:692px;width:1218px;height:1px;background:#d3d5d8"></div>
<span class="cell" style="left:84.00px;top:697px;color:#444;font-size:11px;transform:scaleX(1.1300);transform-origin:0 0">HOTH</span>
<span class="cell" style="left:189.00px;top:697px;color:#444;font-size:11px;transform:scaleX(1.0836);transform-origin:0 0">2022-12-29, 09:07:40</span>
<span class="cell" style="left:540.00px;top:697px;color:#444;font-size:11px;transform:scaleX(0.9804);transform-origin:0 0">100</span>
<span class="cell" style="left:634.00px;top:697px;color:#444;font-size:11px;transform:scaleX(1.0399);transform-origin:0 0">7.4100</span>
<span class="cell" style="left:758.50px;top:697px;color:#444;font-size:11px;transform:scaleX(1.0318);transform-origin:0 0">-741.00</span>
<span class="cell" style="left:917.50px;top:697px;color:#444;font-size:11px;transform:scaleX(0.9769);transform-origin:0 0">-1.00</span>
<span class="cell" style="left:1013.00px;top:697px;color:#444;font-size:11px;transform:scaleX(1.1291);transform-origin:0 0">742.00</span>
<span class="cell" style="left:1186.00px;top:697px;color:#444;font-size:11px;transform:scaleX(1.1204);transform-origin:0 0">0.00</span>
<span class="cell" style="left:1271.58px;top:697px;color:#444;font-size:11px;transform:scaleX(1.1300);transform-origin:0 0">O;P</span>
<div class="a" style="left:183px;top:693px;width:1px;height:20px;background:#dcdcdc"></div>
<div class="a" style="left:446px;top:693px;width:1px;height:20px;background:#dcdcdc"></div>
<div class="a" style="left:563px;top:693px;width:1px;height:20px;background:#dcdcdc"></div>
<div class="a" style="left:674px;top:693px;width:1px;height:20px;background:#dcdcdc"></div>
<div class="a" style="left:802px;top:693px;width:1px;height:20px;background:#dcdcdc"></div>
<div class="a" style="left:947px;top:693px;width:1px;height:20px;background:#dcdcdc"></div>
<div class="a" style="left:1056px;top:693px;width:1px;height:20px;background:#dcdcdc"></div>
<div class="a" style="left:1215px;top:693px;width:1px;height:20px;background:#dcdcdc"></div>
<div class="a" style="left:80px;top:713px;width:1218px;height:1px;background:#e1e1e1"></div>
<span class="cell" style="left:84.00px;top:718px;color:#444;font-size:11px;transform:scaleX(1.1300);transform-origin:0 0">HOTH</span>
<span class="cell" style="left:189.00px;top:718px;color:#444;font-size:11px;transform:scaleX(1.0551);transform-origin:0 0">2022-12-29, 09:16:29</span>
<span class="cell" style="left:540.50px;top:718px;color:#444;font-size:11px;transform:scaleX(1.1002);transform-origin:0 0">-50</span>
<span class="cell" style="left:631.00px;top:718px;color:#444;font-size:11px;transform:scaleX(1.1291);transform-origin:0 0">7.7000</span>
<span class="cell" style="left:759.00px;top:718px;color:#444;font-size:11px;transform:scaleX(1.1291);transform-origin:0 0">385.00</span>
<span class="cell" style="left:917.50px;top:718px;color:#444;font-size:11px;transform:scaleX(0.9769);transform-origin:0 0">-1.02</span>
<span class="cell" style="left:1012.50px;top:718px;color:#444;font-size:11px;transform:scaleX(1.0318);transform-origin:0 0">-371.33</span>
<span class="cell" style="left:1182.00px;top:718px;color:#444;font-size:11px;transform:scaleX(1.0170);transform-origin:0 0">12.65</span>
<span class="cell" style="left:1284.01px;top:718px;color:#444;font-size:11px;transform:scaleX(1.1300);transform-origin:0 0">C</span>
<div class="a" style="left:183px;top:714px;width:1px;height:20px;background:#dcdcdc"></div>
<div class="a" style="left:446px;top:714px;width:1px;height:20px;background:#dcdcdc"></div>
<div class="a" style="left:563px;top:714px;width:1px;height:20px;background:#dcdcdc"></div>
<div class="a" style="left:674px;top:714px;width:1px;height:20px;background:#dcdcdc"></div>
<div class="a" style="left:802px;top:714px;width:1px;height:20px;background:#dcdcdc"></div>
<div class="a" style="left:947px;top:714px;width:1px;height:20px;background:#dcdcdc"></div>
<div class="a" style="left:1056px;top:714px;width:1px;height:20px;background:#dcdcdc"></div>
<div class="a" style="left:1215px;top:714px;width:1px;height:20px;background:#dcdcdc"></div>
<div class="a" style="left:80px;top:734px;width:1218px;height:1px;background:#e1e1e1"></div>
<span class="cell" style="left:84.00px;top:739px;color:#444;font-size:11px;transform:scaleX(1.1300);transform-origin:0 0">HOTH</span>
<span class="cell" style="left:189.00px;top:739px;color:#444;font-size:11px;transform:scaleX(1.0836);transform-origin:0 0">2022-12-29, 09:24:56</span>
<span class="cell" style="left:540.50px;top:739px;color:#444;font-size:11px;transform:scaleX(1.1002);transform-origin:0 0">-50</span>
<span class="cell" style="left:631.00px;top:739px;color:#444;font-size:11px;transform:scaleX(1.1291);transform-origin:0 0">8.7400</span>
<span class="cell" style="left:759.00px;top:739px;color:#444;font-size:11px;transform:scaleX(1.1291);transform-origin:0 0">437.00</span>
<span class="cell" style="left:917.50px;top:739px;color:#444;font-size:11px;transform:scaleX(0.9769);transform-origin:0 0">-1.02</span>
<span class="cell" style="left:1009.50px;top:739px;color:#444;font-size:11px;transform:scaleX(1.1122);transform-origin:0 0">-370.67</span>
<span class="cell" style="left:1179.00px;top:739px;color:#444;font-size:11px;transform:scaleX(1.1260);transform-origin:0 0">65.32</span>
<span class="cell" style="left:1284.01px;top:739px;color:#444;font-size:11px;transform:scaleX(1.1300);transform-origin:0 0">C</span>
<div class="a" style="left:183px;top:735px;width:1px;height:20px;background:#dcdcdc"></div>
<div class="a" style="left:446px;top:735px;width:1px;height:20px;background:#dcdcdc"></div>
<div class="a" style="left:563px;top:735px;width:1px;height:20px;background:#dcdcdc"></div>
<div class="a" style="left:674px;top:735px;width:1px;height:20px;background:#dcdcdc"></div>
<div class="a" style="left:802px;top:735px;width:1px;height:20px;background:#dcdcdc"></div>
<div class="a" style="left:947px;top:735px;width:1px;height:20px;background:#dcdcdc"></div>
<div class="a" style="left:1056px;top:735px;width:1px;height:20px;background:#dcdcdc"></div>
<div class="a" style="left:1215px;top:735px;width:1px;height:20px;background:#dcdcdc"></div>
<div class="a" style="left:80px;top:755px;width:1218px;height:1px;background:#e1e1e1"></div>
<div class="a" style="left:80px;top:756px;width:1218px;height:20px;background:#eff0f2"></div>
<span class="cell" style="left:95.00px;top:759px;color:#222;-webkit-text-stroke:0.3px #222;font-size:11px;transform:scaleX(1.0386);transform-origin:0 0">Total HOTH</span>
<span class="cell" style="left:551.00px;top:759px;color:#222;-webkit-text-stroke:0.3px #222;font-size:11px;transform:scaleX(1.1429);transform-origin:0 0">0</span>
<span class="cell" style="left:769.00px;top:759px;color:#222;-webkit-text-stroke:0.3px #222;font-size:11px;transform:scaleX(1.0170);transform-origin:0 0">81.00</span>
<span class="cell" style="left:914.50px;top:759px;color:#222;-webkit-text-stroke:0.3px #222;font-size:11px;transform:scaleX(1.0966);transform-origin:0 0">-3.03</span>
<span class="cell" style="left:1027.00px;top:759px;color:#222;-webkit-text-stroke:0.3px #222;font-size:11px;transform:scaleX(1.1204);transform-origin:0 0">0.00</span>
<span class="cell" style="left:1179.00px;top:759px;color:#222;-webkit-text-stroke:0.3px #222;font-size:11px;transform:scaleX(1.1260);transform-origin:0 0">77.97</span>
<div class="a" style="left:446px;top:756px;width:1px;height:20px;background:#d0d3d6"></div>
<div class="a" style="left:563px;top:756px;width:1px;height:20px;background:#d0d3d6"></div>
<div class="a" style="left:674px;top:756px;width:1px;height:20px;background:#d0d3d6"></div>
<div class="a" style="left:802px;top:756px;width:1px;height:20px;background:#d0d3d6"></div>
<div class="a" style="left:947px;top:756px;width:1px;height:20px;background:#d0d3d6"></div>
<div class="a" style="left:1056px;top:756px;width:1px;height:20px;background:#d0d3d6"></div>
<div class="a" style="left:1215px;top:756px;width:1px;height:20px;background:#d0d3d6"></div>
<div class="a" style="left:80px;top:776px;width:1218px;height:1px;background:#d3d5d8"></div>
<span class="cell" style="left:84.00px;top:781px;color:#444;font-size:11px;transform:scaleX(1.1300);transform-origin:0 0">KALA</span>
<span class="cell" style="left:189.00px;top:781px;color:#444;font-size:11px;transform:scaleX(1.0551);transform-origin:0 0">2022-12-28, 13:33:29</span>
<span class="cell" style="left:544.00px;top:781px;color:#444;font-size:11px;transform:scaleX(1.1429);transform-origin:0 0">50</span>
<span class="cell" style="left:627.00px;top:781px;color:#444;font-size:11px;transform:scaleX(1.0562);transform-origin:0 0">14.6200</span>
<span class="cell" style="left:758.50px;top:781px;color:#444;font-size:11px;transform:scaleX(1.0318);transform-origin:0 0">-731.00</span>
<span class="cell" style="left:917.50px;top:781px;color:#444;font-size:11px;transform:scaleX(0.9769);transform-origin:0 0">-1.00</span>
<span class="cell" style="left:1013.00px;top:781px;color:#444;font-size:11px;transform:scaleX(1.1291);transform-origin:0 0">732.00</span>
<span class="cell" style="left:1186.00px;top:781px;color:#444;font-size:11px;transform:scaleX(1.1204);transform-origin:0 0">0.00</span>
<span class="cell" style="left:1283.32px;top:781px;color:#444;font-size:11px;transform:scaleX(1.1300);transform-origin:0 0">O</span>
<div class="a" style="left:183px;top:777px;width:1px;height:20px;background:#dcdcdc"></div>
<div class="a" style="left:446px;top:777px;width:1px;height:20px;background:#dcdcdc"></div>
<div class="a" style="left:563px;top:777px;width:1px;height:20px;background:#dcdcdc"></div>
<div class="a" style="left:674px;top:777px;width:1px;height:20px;background:#dcdcdc"></div>
<div class="a" style="left:802px;top:777px;width:1px;height:20px;background:#dcdcdc"></div>
<div class="a" style="left:947px;top:777px;width:1px;height:20px;background:#dcdcdc"></div>
<div class="a" style="left:1056px;top:777px;width:1px;height:20px;background:#dcdcdc"></div>
<div class="a" style="left:1215px;top:777px;width:1px;height:20px;background:#dcdcdc"></div>
<div class="a" style="left:80px;top:797px;width:1218px;height:1px;background:#e1e1e1"></div>
<span class="cell" style="left:84.00px;top:802px;color:#444;font-size:11px;transform:scaleX(1.1300);transform-origin:0 0">KALA</span>
<span class="cell" style="left:189.00px;top:802px;color:#444;font-size:11px;transform:scaleX(1.0551);transform-origin:0 0">2022-12-28, 13:42:20</span>
<span class="cell" style="left:540.50px;top:802px;color:#444;font-size:11px;transform:scaleX(1.1002);transform-origin:0 0">-50</span>
<span class="cell" style="left:627.00px;top:802px;color:#444;font-size:11px;transform:scaleX(1.0562);transform-origin:0 0">13.7500</span>
<span class="cell" style="left:759.00px;top:802px;color:#444;font-size:11px;transform:scaleX(1.1291);transform-origin:0 0">687.50</span>
<span class="cell" style="left:917.50px;top:802px;color:#444;font-size:11px;transform:scaleX(0.9769);transform-origin:0 0">-1.02</span>
<span class="cell" style="left:1009.50px;top:802px;color:#444;font-size:11px;transform:scaleX(1.1122);transform-origin:0 0">-732.00</span>
<span class="cell" style="left:1175.50px;top:802px;color:#444;font-size:11px;transform:scaleX(1.1057);transform-origin:0 0">-45.52</span>
<span class="cell" style="left:1272.27px;top:802px;color:#444;font-size:11px;transform:scaleX(1.1300);transform-origin:0 0">C;P</span>
<div class="a" style="left:183px;top:798px;width:1px;height:20px;background:#dcdcdc"></div>
<div class="a" style="left:446px;top:798px;width:1px;height:20px;background:#dcdcdc"></div>
<div class="a" style="left:563px;top:798px;width:1px;height:20px;background:#dcdcdc"></div>
<div class="a" style="left:674px;top:798px;width:1px;height:20px;background:#dcdcdc"></div>
<div class="a" style="left:802px;top:798px;width:1px;height:20px;background:#dcdcdc"></div>
<div class="a" style="left:947px;top:798px;width:1px;height:20px;background:#dcdcdc"></div>
<div class="a" style="left:1056px;top:798px;width:1px;height:20px;background:#dcdcdc"></div>
<div class="a" style="left:1215px;top:798px;width:1px;height:20px;background:#dcdcdc"></div>
<div class="a" style="left:80px;top:818px;width:1218px;height:1px;background:#e1e1e1"></div>
<div class="a" style="left:80px;top:819px;width:1218px;height:20px;background:#eff0f2"></div>
<span class="cell" style="left:95.00px;top:822px;color:#222;-webkit-text-stroke:0.3px #222;font-size:11px;transform:scaleX(1.0856);transform-origin:0 0">Total KALA</span>
<span class="cell" style="left:551.00px;top:822px;color:#222;-webkit-text-stroke:0.3px #222;font-size:11px;transform:scaleX(1.1429);transform-origin:0 0">0</span>
<span class="cell" style="left:762.50px;top:822px;color:#222;-webkit-text-stroke:0.3px #222;font-size:11px;transform:scaleX(1.1057);transform-origin:0 0">-43.50</span>
<span class="cell" style="left:914.50px;top:822px;color:#222;-webkit-text-stroke:0.3px #222;font-size:11px;transform:scaleX(1.0966);transform-origin:0 0">-2.02</span>
<span class="cell" style="left:1027.00px;top:822px;color:#222;-webkit-text-stroke:0.3px #222;font-size:11px;transform:scaleX(1.1204);transform-origin:0 0">0.00</span>
<span class="cell" style="left:1175.50px;top:822px;color:#222;-webkit-text-stroke:0.3px #222;font-size:11px;transform:scaleX(1.1057);transform-origin:0 0">-45.52</span>
<div class="a" style="left:446px;top:819px;width:1px;height:20px;background:#d0d3d6"></div>
<div class="a" style="left:563px;top:819px;width:1px;height:20px;background:#d0d3d6"></div>
<div class="a" style="left:674px;top:819px;width:1px;height:20px;background:#d0d3d6"></div>
<div class="a" style="left:802px;top:819px;width:1px;height:20px;background:#d0d3d6"></div>
<div class="a" style="left:947px;top:819px;width:1px;height:20px;background:#d0d3d6"></div>
<div class="a" style="left:1056px;top:819px;width:1px;height:20px;background:#d0d3d6"></div>
<div class="a" style="left:1215px;top:819px;width:1px;height:20px;background:#d0d3d6"></div>
<div class="a" style="left:80px;top:839px;width:1218px;height:1px;background:#d3d5d8"></div>
<div class="a" style="left:80px;top:840px;width:1218px;height:20px;background:#eff0f2"></div>
<span class="cell" style="left:95.00px;top:843px;color:#222;-webkit-text-stroke:0.3px #222;font-size:11px;transform:scaleX(1.0954);transform-origin:0 0">Total</span>
<span class="cell" style="left:759.00px;top:843px;color:#222;-webkit-text-stroke:0.3px #222;font-size:11px;transform:scaleX(1.1291);transform-origin:0 0">309.00</span>
<span class="cell" style="left:910.50px;top:843px;color:#222;-webkit-text-stroke:0.3px #222;font-size:11px;transform:scaleX(1.0095);transform-origin:0 0">-10.64</span>
<span class="cell" style="left:1027.00px;top:843px;color:#222;-webkit-text-stroke:0.3px #222;font-size:11px;transform:scaleX(1.1204);transform-origin:0 0">0.00</span>
<span class="cell" style="left:1172.00px;top:843px;color:#222;-webkit-text-stroke:0.3px #222;font-size:11px;transform:scaleX(1.1291);transform-origin:0 0">298.36</span>
<div class="a" style="left:674px;top:840px;width:1px;height:20px;background:#d0d3d6"></div>
<div class="a" style="left:802px;top:840px;width:1px;height:20px;background:#d0d3d6"></div>
<div class="a" style="left:947px;top:840px;width:1px;height:20px;background:#d0d3d6"></div>
<div class="a" style="left:1056px;top:840px;width:1px;height:20px;background:#d0d3d6"></div>
<div class="a" style="left:1215px;top:840px;width:1px;height:20px;background:#d0d3d6"></div>
<div class="a" style="left:80px;top:860px;width:1218px;height:1px;background:#d3d5d8"></div>
<div class="a" style="left:75px;top:881px;width:612px;height:34px;background:#f6f7f7;border:1px solid #d9dadb;border-radius:5px"></div>
<svg class="a" style="left:86px;top:891px" width="12" height="14" viewBox="0 0 12 14"><path d="M3.5 2 L8.5 7 L3.5 12" fill="none" stroke="#1454b8" stroke-width="2.2"/></svg>
<span class="a" style="left:104px;top:889.5px;font-size:16px;line-height:18px;color:#1258c6;display:inline-block;transform:scaleX(0.9796);transform-origin:0 0;">Deposits &amp; Withdrawals</span>
<svg class="a" style="left:656px;top:888px" width="20" height="20" viewBox="0 0 20 20"><circle cx="10" cy="10" r="10" fill="#0d4fc0"/><text x="10" y="15" text-anchor="middle" font-family="Liberation Sans" font-weight="bold" font-size="14" fill="#fff">?</text></svg>
<div class="a" style="left:1535px;top:816px;width:80px;height:50px;background:#0b53bf;border-radius:6px 6px 6px 0;box-shadow:0 3px 12px rgba(0,0,0,0.2)"></div>
<svg class="a" style="left:1535px;top:865px" width="14" height="14" viewBox="0 0 14 14"><path d="M0 0 L12 0 L0 13 Z" fill="#0b53bf"/></svg>
<svg class="a" style="left:1557px;top:828px" width="27" height="26" viewBox="0 0 27 26"><defs><clipPath id="cc"><circle cx="13.3" cy="12.5" r="12.4"/></clipPath></defs><circle cx="13.3" cy="12.5" r="12.4" fill="#fff"/><g clip-path="url(#cc)"><path d="M0 12.5 L18 25.5 L0 30 Z" fill="#d7141f"/></g><circle cx="13.4" cy="10" r="5.7" fill="#d7141f"/></svg>
<div class="a" style="left:0;top:897px;width:1603px;height:50px;background:linear-gradient(90deg,#233741 0%,#213440 30%,#1f3042 60%,#1c2842 100%)"></div>
<div class="a" style="left:0;top:897px;width:229px;height:50px;background:#f1f1f1;border-top:1px solid #d0d0d0"></div>
<span class="a" style="left:-7.6px;top:911.5px;font-size:19px;line-height:22px;color:#222">ch</span>
<div class="a" style="left:355px;top:897px;width:61px;height:50px;background:#4a5a62"></div>
<div class="a" style="left:298px;top:944px;width:51px;height:3px;background:#78b6e6"></div>
<div class="a" style="left:355px;top:944px;width:61px;height:3px;background:#78b6e6"></div>
<div class="a" style="left:856px;top:944px;width:51px;height:3px;background:#78b6e6"></div>
<svg class="a" style="left:248px;top:911px" width="22" height="21" viewBox="0 0 22 21"><g fill="none" stroke="#fff" stroke-width="1.35"><path d="M1.5 0.5 V4.3 H13.5 V0.5 M1.5 20.5 V16.4 H13.5 V20.5"/><rect x="1.5" y="6.6" width="12" height="7.9"/><path d="M19.5 0.5 V20.5"/></g><rect x="18" y="7.2" width="3.2" height="3" fill="#fff"/></svg>
<svg class="a" style="left:309px;top:909px" width="28" height="24" viewBox="0 0 28 24"><path d="M0 2 Q0 0 2 0 H10 L12 2 H26 Q28 2 28 4 V22 Q28 24 26 24 H2 Q0 24 0 22 Z" fill="#e8a825"/><path d="M0 5 H28 V22 Q28 24 26 24 H2 Q0 24 0 22 Z" fill="#f9d16a"/><path d="M5 22 V13 H23 V22 H19 V17 H9 V22 Z" fill="#3d8fd9"/></svg>
<svg class="a" style="left:370px;top:907px" width="30" height="30" viewBox="0 0 30 30"><path id="cr" d="M15 7.6 L27.8 7.6 A15 15 0 0 0 2.2 7.6 L8.6 18.7 L15 15 Z" fill="#e0412f"/><path d="M15 7.6 L27.8 7.6 A15 15 0 0 0 2.2 7.6 L8.6 18.7 L15 15 Z" fill="#f6c026" transform="rotate(120 15 15)"/><path d="M15 7.6 L27.8 7.6 A15 15 0 0 0 2.2 7.6 L8.6 18.7 L15 15 Z" fill="#2a9a48" transform="rotate(240 15 15)"/><circle cx="15" cy="15" r="7.4" fill="#fff"/><circle cx="15" cy="15" r="5.7" fill="#2f7de1"/></svg>
<svg class="a" style="left:433px;top:908px" width="28" height="28" viewBox="0 0 28 28"><ellipse cx="13" cy="16" rx="11" ry="4.5" fill="#8c9298"/><ellipse cx="14" cy="9" rx="12.5" ry="6" transform="rotate(-18 14 9)" fill="#f2f2f2" stroke="#d9342b" stroke-width="1.3"/><path d="M10 3 L16 18 M15 2 L14 17" stroke="#777" stroke-width="1"/><circle cx="16" cy="22" r="3" fill="none" stroke="#2f7fd8" stroke-width="1.8"/><ellipse cx="23" cy="20" rx="3" ry="3.6" fill="none" stroke="#2f7fd8" stroke-width="1.8"/></svg>
<svg class="a" style="left:494px;top:907px" width="30" height="30" viewBox="0 0 30 30"><path d="M1 5 L5 0 H20 L24 5 Z" fill="#b8b8b8"/><rect x="1" y="5" width="23" height="2" fill="#666"/><path d="M3 7 H22 L21 20 Q12 22 4 20 Z" fill="#9aa6b0"/><rect x="5" y="9" width="15" height="8" fill="#bfe3ff"/><rect x="16" y="14" width="13" height="16" fill="#e9e9e9" stroke="#999" stroke-width="0.6"/><rect x="17" y="15" width="11" height="2" fill="#4a78c0"/><rect x="17" y="18" width="4" height="5" fill="#c56a1c"/><path d="M22 19 H28 M22 21 H28 M17 25 H28 M17 27 H28" stroke="#888" stroke-width="0.8"/></svg>
<svg class="a" style="left:556px;top:908px" width="30" height="28" viewBox="0 0 30 28"><rect x="7" y="0" width="22" height="28" rx="1.5" fill="#1b5fbf"/><rect x="7" y="0" width="22" height="7" fill="#41a5ee"/><rect x="7" y="7" width="22" height="7" fill="#2b7cd3"/><rect x="7" y="14" width="22" height="7" fill="#185abd"/><rect x="0" y="6" width="15" height="15" rx="1.5" fill="#185abd"/><text x="7.5" y="17.5" text-anchor="middle" font-family="Liberation Sans" font-weight="bold" font-size="11" fill="#fff">W</text></svg>
<svg class="a" style="left:618px;top:908px" width="30" height="28" viewBox="0 0 30 28"><rect x="7" y="0" width="22" height="28" rx="1.5" fill="#185c37"/><rect x="7" y="0" width="22" height="7" fill="#21a366"/><rect x="18" y="0" width="11" height="7" fill="#33c481"/><rect x="7" y="7" width="22" height="7" fill="#107c41"/><rect x="18" y="7" width="11" height="14" fill="#21a366"/><rect x="0" y="6" width="15" height="15" rx="1.5" fill="#107c41"/><text x="7.5" y="17.5" text-anchor="middle" font-family="Liberation Sans" font-weight="bold" font-size="11" fill="#fff">X</text></svg>
<svg class="a" style="left:680px;top:908px" width="30" height="28" viewBox="0 0 30 28"><rect x="7" y="0" width="22" height="28" rx="1.5" fill="#ca64ea"/><rect x="22" y="7" width="7" height="7" fill="#ae4bd5"/><rect x="22" y="14" width="7" height="7" fill="#9332bf"/><rect x="22" y="21" width="7" height="7" fill="#7719aa"/><rect x="0" y="6" width="15" height="15" rx="1.5" fill="#7719aa"/><text x="7.5" y="17.5" text-anchor="middle" font-family="Liberation Sans" font-weight="bold" font-size="11" fill="#fff">N</text></svg>
<svg class="a" style="left:745px;top:907px" width="24" height="30" viewBox="0 0 24 30"><rect x="13" y="0" width="10.5" height="30" rx="1" fill="#e8b325"/><rect x="6.5" y="7" width="10.5" height="23" rx="1" fill="#f2c811"/><rect x="0" y="15" width="10.5" height="15" rx="1" fill="#f7d96b"/></svg>
<svg class="a" style="left:804px;top:908px" width="30" height="28" viewBox="0 0 30 28"><rect x="8" y="0" width="21" height="11" fill="#0a64c4"/><rect x="18" y="5" width="11" height="10" fill="#28a8ea"/><path d="M8 12 L29 12 L29 27 L8 27 Z" fill="#1490df"/><path d="M8 12 L18.5 20 L29 12" fill="#0f78d4"/><rect x="0" y="6" width="15" height="15" rx="1.5" fill="#0f6cbd"/><circle cx="7.5" cy="13.5" r="3.8" fill="none" stroke="#fff" stroke-width="1.8"/></svg>
<svg class="a" style="left:869px;top:907px" width="23" height="30" viewBox="0 0 23 30"><rect x="0" y="0" width="23" height="30" rx="1.5" fill="#6d7781"/><rect x="3" y="3" width="17" height="5" fill="#49c5f2"/><g fill="#d8dde2"><rect x="3" y="10" width="4.5" height="4"/><rect x="9" y="10" width="4.5" height="4"/><rect x="15" y="10" width="5" height="4"/><rect x="3" y="16" width="4.5" height="4"/><rect x="9" y="16" width="4.5" height="4"/><rect x="3" y="22" width="4.5" height="5"/><rect x="9" y="22" width="4.5" height="5"/></g><rect x="15" y="16" width="5" height="11" fill="#1c4f9a"/></svg>
<svg class="a" style="left:930px;top:909px" width="25" height="25" viewBox="0 0 25 25"><rect x="0" y="0" width="25" height="25" rx="5" fill="#f5f5f5"/><path d="M8 21 V8 Q8 5 12 5 Q18 5 18 10 Q18 15 12 15 H10" fill="none" stroke="#e5463a" stroke-width="2.6"/><path d="M8 21 V11" stroke="#1f9a52" stroke-width="2.6"/><path d="M12 5 Q18 5 18 10" fill="none" stroke="#f5b921" stroke-width="2.6"/></svg>
<svg class="a" style="left:1325px;top:916px" width="18" height="11" viewBox="0 0 18 11"><path d="M1 10 L9 2 L17 10" fill="none" stroke="#fff" stroke-width="1.3"/></svg>
<svg class="a" style="left:1353px;top:914px" width="22" height="15" viewBox="0 0 22 15"><path d="M4 14 Q0 14 0 10.5 Q0 7 4 7 Q5 2 10 2 Q14 2 15.5 5.5 Q21 5.5 21 10 Q21 14 17 14 Z" fill="#e8e8e8"/><path d="M4 14 Q0 14 0 10.5 Q0 8.5 2 7.6 L13 14 Z" fill="#bdbdbd"/></svg>
<svg class="a" style="left:1386px;top:914px" width="17" height="17" viewBox="0 0 17 17"><g fill="none" stroke="#fff" stroke-width="1.2"><path d="M1 16 A15 15 0 0 1 16 1"/><path d="M4.5 16 A11.5 11.5 0 0 1 16 4.5"/><path d="M8 16 A8 8 0 0 1 16 8"/></g><circle cx="15" cy="15" r="1.6" fill="#fff"/></svg>
<svg class="a" style="left:1413px;top:914px" width="22" height="18" viewBox="0 0 22 18"><path d="M1 6 H4.5 L9 2 V16 L4.5 12 H1 Z" fill="none" stroke="#fff" stroke-width="1.2"/><path d="M12 7 Q13.5 9 12 11" fill="none" stroke="#fff" stroke-width="1.2"/><path d="M15 4.5 Q18 9 15 13.5" fill="none" stroke="#ccc" stroke-width="1.1"/><path d="M18 2 Q22.5 9 18 16" fill="none" stroke="#aaa" stroke-width="1.1"/></svg>
<svg class="a" style="left:1447px;top:913px" width="17" height="21" viewBox="0 0 17 21"><path d="M3 4 Q8 0 13 4 M3 17 Q8 21 13 17" fill="none" stroke="#fff" stroke-width="1.2"/><rect x="1" y="6" width="10" height="9" rx="1.5" fill="none" stroke="#fff" stroke-width="1.3"/><path d="M11 9 L16 6.5 V14.5 L11 12" fill="none" stroke="#fff" stroke-width="1.3"/></svg>
<svg class="a" style="left:1474px;top:913px" width="31" height="18" viewBox="0 0 31 18"><rect x="0.7" y="0.7" width="29.6" height="16.6" fill="none" stroke="#fff" stroke-width="1.3"/><g fill="#fff"><rect x="4" y="4" width="2" height="1.2"/><rect x="8" y="4" width="2" height="1.2"/><rect x="12" y="4" width="2" height="1.2"/><rect x="16" y="4" width="2" height="1.2"/><rect x="20" y="4" width="2" height="1.2"/><rect x="24" y="4" width="2" height="1.2"/><rect x="4" y="8" width="3" height="1.2"/><rect x="9" y="8" width="2" height="1.2"/><rect x="13" y="8" width="2" height="1.2"/><rect x="17" y="8" width="2" height="1.2"/><rect x="21" y="8" width="5" height="1.2"/><rect x="4" y="12" width="3" height="1.2"/><rect x="9" y="12" width="12" height="1.2"/><rect x="23" y="12" width="3" height="1.2"/></g></svg>
<span class="a" style="left:1523.5px;top:902px;font-size:14px;line-height:16px;color:#fff;display:inline-block;transform:scaleX(1.0706);transform-origin:0 0;">9:14 AM</span>
<span class="a" style="left:1517.5px;top:925px;font-size:14px;line-height:16px;color:#fff;display:inline-block;transform:scaleX(1.0835);transform-origin:0 0;">1/13/2023</span>
</body></html>
